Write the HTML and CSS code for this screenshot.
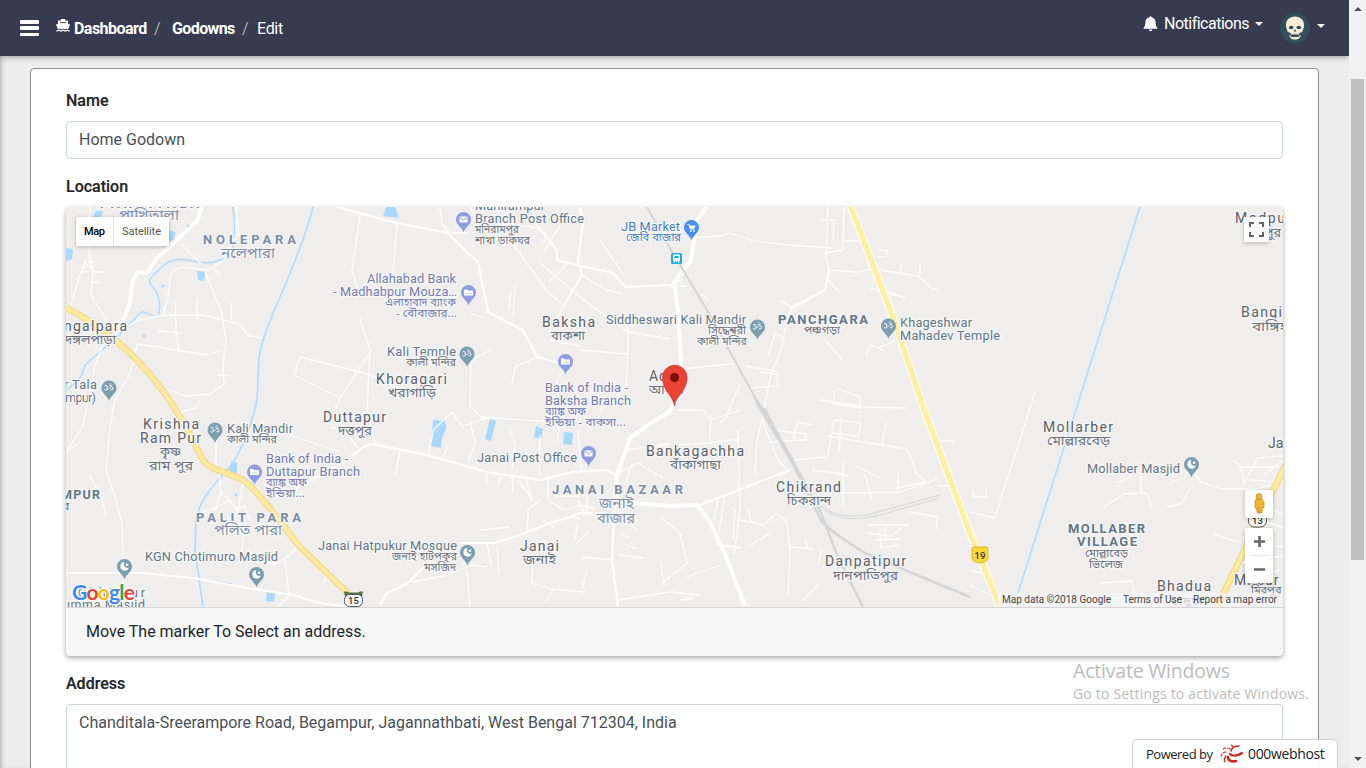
FILE: index.html
```html
<!DOCTYPE html>
<html lang="en">
<head>
<meta charset="utf-8">
<title>Edit Godown</title>
<link rel="stylesheet" href="styles.css">
</head>
<body>
<div class="page">
  <header class="navbar">
    <div class="burger"><i></i><i></i><i></i></div>
    <nav class="crumbs">
      <svg class="ship" viewBox="0 0 14 14"><path fill="#fff" d="M5 0h4v1.500h3v3.200l2 .8-1.600 4.500c-.7.2-1.300 0-1.800-.5-1 1-2.300 1-3.600 0-1 1-2.300 1-3.300 0-.5.5-1.100.7-1.800.5L0 5.500l2-.8V1.500h3z"/><path fill="none" stroke="#363b50" stroke-width=".9" d="M4 3.600h6"/><path fill="none" stroke="#fff" stroke-width="1.300" d="M.5 12c1.300 0 1.700-.8 2.300-.8s1.200.8 2.200.8 1.300-.8 2-.8 1.200.8 2.200.8 1.400-.8 2-.8 1 .8 2.300.8"/></svg>
      <b class="c1">Dashboard</b><span class="sl s1">/</span><b class="c2">Godowns</b><span class="sl s2">/</span><span class="c3">Edit</span>
    </nav>
    <div class="right">
      <svg class="bell" viewBox="0 0 15 16"><path fill="#fff" d="M6.500 1.200a1 1 0 0 1 2 0C11.600 1.700 12.600 4 12.600 6.500c0 3 .9 4.600 2.200 6.200H.2C1.500 11.100 2.400 9.500 2.400 6.500 2.400 4 3.400 1.700 6.500 1.200zM5.700 13.500h3.600a1.800 1.800 0 0 1-3.600 0z"/></svg>
      <span class="notif">Notifications</span><i class="caret"></i>
      <svg class="avatar" viewBox="0 0 30 30"><circle cx="15" cy="15" r="15" fill="#324f5e"/><path fill="#f9edd4" d="M15 3.500c5.500 0 9 3.600 9 8.500 0 3-1 4-1.300 6-.2 1.500-1.700 1.200-3 1.700-.8.5-.3 2-1.200 2.300h-7c-.9-.3-.4-1.800-1.200-2.300-1.300-.5-2.800-.2-3-1.700C7 16 6 15 6 12c0-4.900 3.500-8.500 9-8.500z"/><path fill="#f9edd4" d="M9.500 21.500l2 2.500h7l2-2.500c.5 3-2 5-5.500 5s-6-2-5.500-5z"/><ellipse cx="11.200" cy="14.500" rx="2.300" ry="1.800" fill="#324a5e"/><ellipse cx="18.800" cy="14.500" rx="2.300" ry="1.800" fill="#324a5e"/><path fill="#324a5e" d="M15 16l1.400 2.500h-2.800z"/><path stroke="#324a5e" stroke-width=".5" d="M11 21.800h8M13 20.500v2M15 20.500v2M17 20.500v2"/></svg>
      <i class="caret"></i>
    </div>
  </header>
  <main class="card">
    <label class="lab">Name</label>
    <div class="field">Home Godown</div>
    <label class="lab">Location</label>
    <section class="mapcard">
      <svg class="map" viewBox="66 207 1217 400">
        <defs>
          <g id="pin"><path d="M0 13C-1 8-7.500 5.500-7.500 0a7.500 7.500 0 0 1 15 0C7.500 5.500 1 8 0 13z"/></g>
          <g id="om"><use href="#pin" fill="#7b9eb0"/><path fill="none" stroke="#fff" stroke-width="1" d="M-4.500-2c2.500-1.500 4 .8 1.800 1.500C0 0-1.500 3.500-4.500 1.500M-1.200 .2c1.500 1.500 2-2 4-1.500 2.200.8 1 4.300-1.300 2.900M.3-3.200c.8 1 2.500.5 3-.3M1.500-4.800v.6"/></g>
          <g id="moon"><use href="#pin" fill="#7b9eb0"/><path fill="#fff" d="M0-4.500a4.300 4.300 0 1 0 4.300 5.500A3.600 3.600 0 0 1 0-4.500z"/><circle cx="2.500" cy="-1.800" r="1.300" fill="#fff"/></g>
          <g id="bank"><use href="#pin" fill="#909ce1"/><path fill="#fff" d="M-4.500-3h3l1 1h5v5h-9z"/><path stroke="#909ce1" stroke-width=".9" d="M-2 1h1M0 1h1M2 1h1"/></g>
          <g id="post"><use href="#pin" fill="#909ce1"/><path fill="#fff" d="M-4-3h8v6h-8z"/><path fill="none" stroke="#909ce1" d="M-4-2.500L0 .5l4-3"/></g>
        </defs>
        <rect x="66" y="207" width="1217" height="400" fill="#efeeed"/>
        <g class="water">
          <path d="M96 211h7l-2 6h-8zM168 230l7 2-1 8-7 2zM66 248l7 1-1 10-6 2zM197 271l8 1-1 9-6-1zM386 207h9l4 11-16-2zM433 420l12 1 1 8-4 9-1 10-10-2zM490 419l6 2-5 20-6-2zM536 426l7 3-2 10-7-2zM564 432l9 1-1 12-9-1zM231 461l6 2v10l-7-1zM267 592l8 1-1 9-8-1z"/>
          <circle cx="163" cy="286" r="1.500"/><circle cx="188" cy="226" r="1.500"/><circle cx="144" cy="336" r="1.500"/><circle cx="236" cy="495" r="1.500"/>
        </g>
        <g class="river">
          <path d="M313 207C306 235 297 257 286 283C275 310 262 335 259 358L257 400C252 424 243 446 233 463C220 480 200 495 196 520L195 550L203 607"/>
          <path d="M233 207C236 230 235 245 230 255C219 262 210 264 197 262C185 258 170 258 162 267C152 277 147 279 151 285C162 296 160 310 158 316C149 318 145 308 139 314L117 337L85 365L81 377L66 391"/>
          <path d="M1140 207L1018 593M209 581l22 3"/>
        </g>
        <g class="minor">
          <path d="M90 207l-1 48 4 15-2 25 17 27 1 14M87 258l-8 20-8 28M80 272h8m-3-9l8 6M92 272h12m-13 10h8M88 262h6M115 333l22-12 26-6 5-18 3-24 10-6 27 3 15-9 13-25 1-30M205 272l16 38 5 30-3 25 1 19-13 10-26 2-18-7M220 275l-8-8M160 316l10-1h33l20 5M175 302l1 29M197 310v10M197 297v20M223 320l15 4 11 12 14 2M231 303v17M158 331l22 2M176 331l3 22M134 358l3-14 20 3 50 8 16-5M133 363l-4 12-15 27-4 27 -4 40 10 32 6 22 2 65M103 345l-8 20-5 30-8 33-16 24M89 475l13 22 4 20M217 375h14M236 207l3 30M181 244l20 20"/>
          <path d="M397 223l-4 50M358 290l-6 -20 8-55M300 357l-6 18 46 23 30-46M300 357l60 15 25 8M340 398l-5 12M360 319l10 30 -3 58 8 37M470 207l7 12 26-2 8-10M440 207l2 17 8 10M448 233h20M535 223l22 27 0 10M583 223l-22-13M512 243l35 48 16 14M540 263l45 38 43 31 42 7M550 281l18-18M582 275l24 15 17 4M563 307l-8 15 1 12M620 315l8 14v20l-2 38-26 23M580 350l47 4M550 340l30 6M490 350l-19 11-1 45 14 14M537 357l-22 10-3 17M470 313l13 5M507 298l4-6-2 17M515 285l-2 32M567 365l-10 15 3 35M560 226l-16 25M534 227l12 7-2 8M500 224l35 3M600 240l24 35"/>
          <path d="M690 238l30-2 10-3 24 8 35 4 43 3M828 207l-2 50 3 13-4 20-25 15-8 3-4 10-8 35-9 20-7 38-7 30-2 32M844 207l-1 43-18 3M822 220h12l-1 20M843 241h20M828 270l30 2 15-3 45 7 13 12 6 2M885 290l20 8M900 275l1-11M920 275v-11M876 257h10l2-6-9-1M828 280l11 12M870 288l35 10M780 300l16 10M768 355l7-22 10 5M760 372l16 2 2 12-28 2M745 366l32 5M740 384l-15 35-6 4M825 340l17 20M866 355l4-10 15 6M878 348l22-9 10 1M834 390v14l28 4M820 400l46 7 40 1M836 388l24 9v10M708 300l-6-6M670 287l17-1M673 370l65-7M645 315l16 14"/>
        </g>
        <g class="minor">
          <path d="M678 410h25l7 10 30-10M711 415l-1 28-35 2M710 443l30-4M738 430l2 80-6 45M763 422l14 36 10 12M775 430l30 4 2 6-35 2M793 438l5-16 14 3M834 420l-7 40M834 420l27 3-3 13-27-3M827 436l80 13 10 25 9 8-30 6M841 418l-2 35M886 422l-4 23M793 460l33-3M812 470l24 3 12 3M843 463v43M856 466l24 12M898 472v20M865 475l7 25M840 493l60-1 38-13M869 525h40M880 530l1 18 17-3M875 540l25-1M885 525v14M866 533l25 3 10-8M718 500l-4 20M725 495l-8 50 25 3M735 510l-2 30M748 507l3 15M740 520l24 5 12-12 11 9 3 30-2 45M770 533l-19 12M790 547l24 2M805 540l4 10M660 517l20 16 7 30-25 20M686 577l35-12M818 565l3-15M822 567l65-7M803 600l16-16M680 600l13-2M910 512l28 5-2 12M937 486h16l3-5M941 440l14 2"/>
          <path d="M66 452l14-10M200 400l-4 8-15 4 6 21M187 430l6 12M216 440v30M219 472l2 20-5 15-14 5M221 492l17 18 6-5 6 15M229 500l-17 11M243 480l-6 37M245 520l-4 40M249 560l27 4 15-10 10-11M285 560l4 35-10 12M327 574l-4 10M290 435l50 17M330 427l28 7M360 450l-10-12M400 451l-5 25M428 455l6-26 18-17M452 412l10 14 26-8M448 447l-7 12M470 422l5 20-6 18M511 430l4 15-3 25M487 472v14M501 473l-3 13M512 475l1 17M525 475l7 27M548 478v22l16 10 17-5 15 4M555 496h25M527 530l1-20 12-10M543 520l12 8M575 540l3-18M590 530l-15 15M573 515l7 5M518 480l15 20M480 417l60 4 35 2M560 421l-3 22M578 430l3 40M587 496v16M540 435l-1 40M533 558l-1 25 18 6 35 3M553 589l-7 14M587 570l-5 20M462 565l10-12M412 582l35-7 25-10 15 2M467 570l3 37M487 543l4 22M497 545l2 30M480 530l30-3M632 463l-6 20M618 473l20-10 25 15M625 450l45-6M620 534l10 4M625 544l10 4M585 515l-7-15M618 555l25 3M612 560l-30-3M618 600l52-8 30 3M618 510l20 22M660 560l4 25"/>
          <path d="M973 490v7h13v-10M970 512l25 6M1035 392L995 518M1104 507l20-13 22-1 6 13M1141 466v28M1118 483l12-6v-12M1170 483l15-6 5-10 12 16 20 6h34l25-8M1190 488l-8 15-15 4M1205 483l10 4M1240 467h40M1243 485l15-27 25-2M1250 480l33 2M1264 475l19-14M1232 460l8 5 5 20M1100 583l32-2 4 26M1213 534l25 8M1233 560l25 5M970 570l15 4M970 585l20 10M1255 500l28 15M1262 520l21 8M1250 540l33 7M1248 560l35-4M1260 575l20-5"/>
        </g>
        <g class="medium">
          <path d="M337 207l60 16 51 10 19 19 11 10 10 50 35 18 14 27 23 6"/>
          <path d="M533 207l2 16 22 27v10l20 5 36 8 12 14 47-2 10-6M580 207l3 16-5 37 4 15-19 32"/>
          <path d="M293 490l50-27 20-16 9-3 55 11 60 17 53 8 33-8 34-2 10 6M380 605l7-12 20-9 20-20M460 543l35 0 25-8 30-12 20-6 10-4 33 1M615 500l-3 60 6 47M697 506l93-36"/>
          <path d="M66 573l77 0 50 5 54 10 46 7 27 8 30 4M829 270l-4 20-35 18"/>
        </g>
        <g class="major">
          <path d="M202 207l-5 14-20 19-20 18-10 15-9-1-6 11-2 20-8 20-7 10M707 207l-10 13-6 40-17 22 4 28 3 50-6 43-7 10-17 10-21 15-13 37-2 23 18 5 37 3 27-1 13 17 17 37 18 47"/>
        </g>
        <g class="rail">
          <path stroke-width="2" d="M647 207l20 36 40 67 50 91"/><path stroke-width="4" d="M756 400l37 62"/><path stroke-width="2.500" d="M764 408l18 34 29 58 11 22 14 12 27 18 37 16 70 29M782 442l38 68 17 45 26 52"/><path d="M820 505c15 12 30 12 47 10l73-20M825 510c16 11 30 9 47 7l65-18"/>
        </g>
        <g class="hwy-edge"><path d="M66 308C103 326 133 352 160 387C178 410 190 435 202 458C208 470 221 469 243 480C260 493 280 522 300 547L353 598"/><path d="M1286 464L1217 607"/></g>
        <g class="hwy"><path d="M66 308C103 326 133 352 160 387C178 410 190 435 202 458C208 470 221 469 243 480C260 493 280 522 300 547L353 598"/><path d="M1286 464L1217 607"/></g>
        <path d="M850 205l43 112 32 95 45 121 31 76" fill="none" stroke="#fffdf2" stroke-width="8"/>
        <path d="M850 205l43 112 32 95 45 121 31 76" fill="none" stroke="#fdeea4" stroke-width="5.500"/>

        <g class="town">
          <g class="gray">
            <text x="100" y="208" textLength="99">PAKHITALA</text>
            <text x="203" y="244" textLength="93">NOLEPARA</text>
            <text x="196" y="522" textLength="105">PALIT PARA</text>
            <text x="552" y="494" textLength="131">JANAI BAZAAR</text>
          </g>
          <text x="778" y="324" textLength="90">PANCHGARA</text>
          <text x="1068" y="533" textLength="77">MOLLABER</text>
          <text x="1077" y="546" textLength="60">VILLAGE</text>
          <text x="61" y="499" textLength="39" class="sm">MPUR</text>
        </g>
        <g class="place">
          <text x="64" y="331" textLength="63">ngalpara</text>
          <text x="542" y="327" textLength="53">Baksha</text>
          <text x="376" y="384" textLength="71">Khoragari</text>
          <text x="323" y="422" textLength="63">Duttapur</text>
          <text x="143" y="429" textLength="56">Krishna</text>
          <text x="140" y="443" textLength="61">Ram Pur</text>
          <text x="649" y="381" textLength="35">Adan</text>
          <text x="646" y="456" textLength="98">Bankagachha</text>
          <text x="776" y="492" textLength="65">Chikrand</text>
          <text x="825" y="566" textLength="81">Danpatipur</text>
          <text x="520" y="551" textLength="39">Janai</text>
          <text x="1043" y="432" textLength="70">Mollarber</text>
          <text x="1157" y="591" textLength="54">Bhadua</text>
          <text x="1241" y="317" textLength="41">Bangi</text>
          <text x="1235" y="223" textLength="50">Madpu</text>
          <text x="1268" y="448">Jan</text>
          <text x="1234" y="585" textLength="62">Mirsar M</text>
          <text x="78" y="597" textLength="67" class="np">Chhitnur</text>
          <text x="63" y="609" textLength="82" class="np">umma Masjid</text>
        </g>
        <g class="poi">
          <text x="367" y="283" textLength="89" class="p">Allahabad Bank</text>
          <text x="333" y="296" textLength="124" class="p">- Madhabpur Mouza…</text>
          <text x="545" y="391.500" textLength="83" class="p">Bank of India -</text>
          <text x="545" y="404.500" textLength="86" class="p">Baksha Branch</text>
          <text x="266" y="462.500" textLength="82" class="p">Bank of India -</text>
          <text x="266" y="475.500" textLength="94" class="p">Duttapur Branch</text>
          <text x="621" y="230.500" textLength="59" class="b">JB Market</text>
          <text x="475" y="210" textLength="70">Manirampur</text>
          <text x="475" y="222.500" textLength="109">Branch Post Office</text>
          <text x="477" y="461.500" textLength="100">Janai Post Office</text>
          <text x="387" y="355.500" textLength="69">Kali Temple</text>
          <text x="227" y="432.500" textLength="66">Kali Mandir</text>
          <text x="606" y="323.500" textLength="140">Siddheswari Kali Mandir</text>
          <text x="900" y="326.500" textLength="72">Khageshwar</text>
          <text x="900" y="339.500" textLength="100">Mahadev Temple</text>
          <text x="64" y="388.500" textLength="33">r Tala</text>
          <text x="65" y="401.500" textLength="31">mpur)</text>
          <text x="145" y="560.500" textLength="133">KGN Chotimuro Masjid</text>
          <text x="318" y="549.500" textLength="139">Janai Hatpukur Mosque</text>
          <text x="1087" y="472.500" textLength="93">Mollaber Masjid</text>
        </g>
        <g class="bn">
          <text x="119" y="220" textLength="60" lengthAdjust="spacingAndGlyphs" class="l">পাখিতালা</text>
          <text x="221" y="258" textLength="54" lengthAdjust="spacingAndGlyphs" class="l">নলেপারা</text>
          <text x="214" y="535" textLength="68" lengthAdjust="spacingAndGlyphs" class="l">পলিত পারা</text>
          <text x="599" y="508" textLength="35" lengthAdjust="spacingAndGlyphs" class="l">জনাই</text>
          <text x="597" y="523" textLength="38" lengthAdjust="spacingAndGlyphs" class="l">বাজার</text>
          <text x="65" y="344" textLength="51" lengthAdjust="spacingAndGlyphs">দঙ্গলপাড়া</text>
          <text x="551" y="340" textLength="34" lengthAdjust="spacingAndGlyphs">বাকশা</text>
          <text x="388" y="397" textLength="48" lengthAdjust="spacingAndGlyphs">খরাগাড়ি</text>
          <text x="338" y="435" textLength="34" lengthAdjust="spacingAndGlyphs">দত্তপুর</text>
          <text x="160" y="456" textLength="21" lengthAdjust="spacingAndGlyphs">কৃষ্ণ</text>
          <text x="149" y="470" textLength="44" lengthAdjust="spacingAndGlyphs">রাম পুর</text>
          <text x="649" y="394" textLength="35" lengthAdjust="spacingAndGlyphs">আদান</text>
          <text x="670" y="469" textLength="51" lengthAdjust="spacingAndGlyphs">বাঁকাগাছা</text>
          <text x="787" y="505" textLength="44" lengthAdjust="spacingAndGlyphs">চিকরান্দ</text>
          <text x="833" y="580" textLength="65" lengthAdjust="spacingAndGlyphs">দানপাতিপুর</text>
          <text x="523" y="564" textLength="33" lengthAdjust="spacingAndGlyphs">জনাই</text>
          <text x="1047" y="445" textLength="63" lengthAdjust="spacingAndGlyphs">মোল্লারবেড়</text>
          <text x="1252" y="331" textLength="36" lengthAdjust="spacingAndGlyphs">বাঙ্গিহ</text>
          <text x="1250" y="237" textLength="31" lengthAdjust="spacingAndGlyphs">মদপুর</text>
          <text x="804" y="334" textLength="36" lengthAdjust="spacingAndGlyphs" class="s">পঞ্চগড়া</text>
          <text x="1085" y="557" textLength="43" lengthAdjust="spacingAndGlyphs" class="s">মোল্লাবেড়</text>
          <text x="1089" y="568" textLength="34" lengthAdjust="spacingAndGlyphs" class="s">ভিলেজ</text>
          <text x="1170" y="605" textLength="33" lengthAdjust="spacingAndGlyphs" class="s">ভাদুয়া</text>
          <text x="1251" y="594" textLength="40" lengthAdjust="spacingAndGlyphs" class="s">মিরপুর ম</text>
          <text x="475" y="233" textLength="44" lengthAdjust="spacingAndGlyphs" class="s">মনিরামপুর</text>
          <text x="475" y="244" textLength="55" lengthAdjust="spacingAndGlyphs" class="s">শাখা ডাকঘর</text>
          <text x="406" y="366" textLength="50" lengthAdjust="spacingAndGlyphs" class="s">কালী মন্দির</text>
          <text x="227" y="443" textLength="50" lengthAdjust="spacingAndGlyphs" class="s">কালী মন্দির</text>
          <text x="708" y="334" textLength="38" lengthAdjust="spacingAndGlyphs" class="s">সিদ্ধেশ্বরী</text>
          <text x="697" y="345" textLength="50" lengthAdjust="spacingAndGlyphs" class="s">কালী মন্দির</text>
          <text x="392" y="560" textLength="65" lengthAdjust="spacingAndGlyphs" class="s">জনাই হাটপুকুর</text>
          <text x="424" y="571" textLength="32" lengthAdjust="spacingAndGlyphs" class="s">মসজিদ</text>
          <text x="626" y="241" textLength="55" lengthAdjust="spacingAndGlyphs" class="s bb">জেবি বাজার</text>
          <text x="385" y="306" textLength="71" lengthAdjust="spacingAndGlyphs" class="s p">এলাহাবাদ ব্যাংক</text>
          <text x="396" y="317" textLength="61" lengthAdjust="spacingAndGlyphs" class="s p">- বৌবাজার...</text>
          <text x="545" y="415" textLength="41" lengthAdjust="spacingAndGlyphs" class="s p">ব্যাঙ্ক অফ</text>
          <text x="545" y="426" textLength="81" lengthAdjust="spacingAndGlyphs" class="s p">ইন্ডিয়া - বাকসা...</text>
          <text x="266" y="486" textLength="41" lengthAdjust="spacingAndGlyphs" class="s p">ব্যাঙ্ক অফ</text>
          <text x="266" y="497" textLength="39" lengthAdjust="spacingAndGlyphs" class="s p">ইন্ডিয়া...</text>
          <text x="63" y="510" class="s">র</text>
        </g>

        <use href="#om" x="109" y="388"/><use href="#om" x="467" y="354"/><use href="#om" x="215" y="430"/><use href="#om" x="757.500" y="327"/><use href="#om" x="888.500" y="326"/>
        <use href="#moon" x="124.500" y="566.500"/><use href="#moon" x="256.500" y="574.500"/><use href="#moon" x="467.500" y="552.500"/><use href="#moon" x="1191.500" y="464.500"/>
        <use href="#bank" x="468.500" y="292.500"/><use href="#bank" x="565.500" y="361.500"/><use href="#bank" x="254.500" y="472"/>
        <use href="#post" x="463.500" y="219.500"/><use href="#post" x="588.500" y="453.500"/>
        <use href="#pin" x="691.500" y="227.500" fill="#4a8df0"/><path d="M687.500 224.500h1.500l1.300 4.500h4" fill="none" stroke="#fff"/><path d="M689.500 225.500h6l-1 3h-4z" fill="#fff"/><circle cx="690.800" cy="231" r=".9" fill="#fff"/><circle cx="694" cy="231" r=".9" fill="#fff"/>
        <rect x="671" y="253" width="11" height="11" rx="1.500" fill="#1cace8"/><rect x="673" y="254.500" width="7" height="7" rx="1" fill="#fff"/><path d="M674.500 256h4v2h-4z" fill="#1cace8"/><path d="M674 263l1-2m4 2l-1-2" stroke="#fff"/>
        <path d="M674.500 406c-1-10-12-15-12-28.500a12.300 12.300 0 0 1 24.600 0c0 13.500-11.600 18.500-12.600 28.500z" fill="#ea4335" stroke="#c9382d" stroke-width=".7"/><circle cx="674.500" cy="377.500" r="4.500" fill="#7d0f0a"/>
        <path d="M344 591.500h3l2 1h9l2-1h3l-1 5h-17z" fill="#50764b"/><rect x="344.500" y="594.500" width="18" height="12" rx="5" fill="#fff" stroke="#555"/><text x="353.500" y="604" class="shield">15</text>
        <path d="M973 547h14l1 3v8q0 4-8 5-8-1-8-5v-8z" fill="#fdd835" stroke="#caa51f" stroke-width=".7"/><text x="980" y="558.500" class="shield">19</text>
        <rect x="1248.500" y="514" width="18" height="13" rx="6" fill="#fff" stroke="#555"/><text x="1257.500" y="524" class="shield">13</text>

        <g class="ctl"><rect x="76" y="217" width="93" height="29" rx="2"/><rect x="1244" y="217" width="25" height="25"/><rect x="1245" y="490" width="28" height="28" rx="2"/><rect x="1245" y="528" width="28" height="55" rx="2"/></g>
        <path d="M113.500 217v29M1250 555.500h18" stroke="#e6e6e6"/>
        <text x="84" y="235" class="tab on" textLength="21">Map</text><text x="122" y="235" class="tab" textLength="39">Satellite</text>
        <path d="M1250 227v-4h4m5 0h4v4m0 5v4h-4m-5 0h-4v-4" fill="none" stroke="#666" stroke-width="2"/>
        <path d="M1254 541.500h11M1259.500 536v11M1254 569.500h11" stroke="#666" stroke-width="2.600"/>
        <g fill="#f6b12d" stroke="#b87a17" stroke-width=".6"><path d="M1256 499h6l2 3v6h-1.500l-.7 5h-4.600l-.7-5h-1.500v-6z"/><circle cx="1259" cy="496.500" r="3"/><path d="M1259 507v6"/></g>
        <rect x="998" y="593" width="285" height="14" fill="#f5f5f5" opacity=".7"/>
        <text x="1002" y="603" class="legal" textLength="109">Map data ©2018 Google</text><text x="1123" y="603" class="legal" textLength="59">Terms of Use</text><text x="1193" y="603" class="legal" textLength="84">Report a map error</text>
        <text x="72" y="600" class="glogo halo" textLength="63">Google</text>
        <text x="72" y="600" class="glogo" textLength="63"><tspan fill="#4285f4">G</tspan><tspan fill="#ea4335">o</tspan><tspan fill="#fbbc05">o</tspan><tspan fill="#4285f4">g</tspan><tspan fill="#34a853">l</tspan><tspan fill="#ea4335">e</tspan></text>
      </svg>
      <div class="foot">Move The marker To Select an address.</div>
    </section>
    <label class="lab">Address</label>
    <div class="field area">Chanditala-Sreerampore Road, Begampur, Jagannathbati, West Bengal 712304, India</div>
  </main>
</div>
<aside class="scroll"><i class="up"></i><div class="thumb"></div><i class="down"></i></aside>
<div class="activate"><div class="a1">Activate Windows</div><div class="a2">Go to Settings to activate Windows.</div></div>
<div class="host"><span class="pw">Powered by</span>
  <svg viewBox="0 0 24 22"><g fill="none" stroke="#d0271d" stroke-linecap="round"><path stroke-width="2.200" d="M10 11c2 2.500 8 2 12-1"/><path stroke-width="2.600" d="M8 14c0 4 4 5 8 4"/><path stroke-width="1.600" d="M11 8c1-4 5-5 8-5"/><path stroke-width="1.300" d="M6 13c-2 2-2 4-1 6"/><path stroke-width="1.200" d="M6 9c-3 0-4 2-5 4" stroke-dasharray="3 2"/><path stroke-width="1.200" d="M10 6C7 4 4 5 2 7M13 4c-1-2-2-2-3-2" stroke-dasharray="2.500 2"/></g></svg>
  <span class="hw">000webhost</span></div>
</body>
</html>
```
FILE: styles.css
```css
* { box-sizing: border-box; }
body { margin: 0; width: 1366px; height: 768px; overflow: hidden; display: flex; background: #ededed; font-family: Roboto, "Liberation Sans", sans-serif; font-size: 16px; line-height: 24px; color: #212529; position: relative; }
.page { width: 1349px; height: 768px; overflow: hidden; box-shadow: inset 4px 0 5px -3px #aaa; }
.navbar { height: 56px; background: #363b50; color: #fff; display: flex; align-items: center; padding: 0 24px 0 20px; box-shadow: 0 1px 6px rgba(0,0,0,.35); position: relative; }
.burger { width: 19px; height: 16px; display: flex; flex-direction: column; justify-content: space-between; }
.burger i { height: 3.500px; background: #fff; border-radius: 1px; }
.crumbs { display: flex; align-items: center; margin-left: 17px; flex: 1; white-space: nowrap; padding-top: 1px; }
.ship { width: 14px; height: 14px; margin: -6px 4px 0 0; }
.crumbs b { font-weight: 700; }
.c1 { width: 73px; letter-spacing: -.53px; }
.c2 { width: 63px; letter-spacing: -.6px; }
.c3 { letter-spacing: -.3px; }
.sl { color: #aeb1bb; width: 8px; }
.s1 { margin: 0 10px 0 7px; }
.s2 { margin: 0 7px 0 7px; }
.right { display: flex; align-items: center; height: 56px; }
.bell { width: 15px; height: 16px; margin: -8px 6px 0 0; }
.notif { width: 85px; margin-top: -8px; white-space: nowrap; font-weight: 400; letter-spacing: -.55px; letter-spacing: -.5px; }
.caret { border: 4.500px solid transparent; border-top-color: #fff; border-bottom: 0; margin: -9px 0 0 6px; }
.avatar { width: 30px; height: 30px; margin-left: 17px; }
.avatar + .caret { margin: -4px 0 0 7px; }
.card { margin: 12px 30px 0; height: 760px; border: 1px solid #8c8c8c; border-radius: 4px; background: #fff; padding: 20px 35px; }
.lab { display: block; font-weight: 500; margin-bottom: 8px; -webkit-text-stroke: .2px #212529; }
.field { height: 38px; border: 1px solid #ced4da; border-radius: 4px; padding: 6px 12px; margin-bottom: 16px; color: #495057; }
.area { height: 130px; }
.mapcard { border-radius: 4px; overflow: hidden; box-shadow: 0 2px 5px rgba(0,0,0,.35); margin-bottom: 16px; background: #f7f7f7; }
.map { display: block; width: 1217px; height: 400px; }
.foot { height: 49px; border-top: 1px solid #d5d5d5; padding: 12px 20px; }
.scroll { width: 17px; height: 768px; background: #f1f1f1; display: flex; flex-direction: column; align-items: center; }
.up { border: 4px solid transparent; border-bottom: 4px solid #505050; border-top: 0; margin-top: 7px; }
.thumb { width: 13px; height: 481px; background: #c1c1c1; margin-top: 68px; }
.down { border: 4px solid transparent; border-top: 4px solid #505050; border-bottom: 0; margin: auto 0 7px; }
.activate { position: absolute; left: 1073px; top: 658px; color: #bcbcbc; font-family: "Open Sans", "Noto Sans", sans-serif; white-space: nowrap; }
.a1 { font-size: 19.500px; line-height: 26px; letter-spacing: -.2px; }
.a2 { font-size: 14px; line-height: 20px; letter-spacing: .19px; }
.host { position: absolute; left: 1132px; top: 739px; width: 206px; height: 34px; border: 1px solid #d0d0d0; border-radius: 5px; background: rgba(255,255,255,.9); display: flex; align-items: flex-start; padding: 3px 0 0 13px; font: 13px/22px "Open Sans", sans-serif; color: #222; white-space: nowrap; }
.host svg { width: 24px; height: 22px; margin: 0 4px 0 7px; }
.pw { width: 67px; letter-spacing: -.5px; }
.hw { font-size: 14px; font-weight: 500; letter-spacing: -.35px; }
.water { fill: #a9d8fd; }
.river { fill: none; stroke: #b1dafb; stroke-width: 1.600; }
.minor, .medium, .major, .rail, .hwy, .hwy-edge { fill: none; stroke: #fff; stroke-linejoin: round; }
.minor { stroke-width: 1.300; opacity: .9; }
.medium { stroke-width: 2; }
.major { stroke-width: 4; }
.rail { stroke: #d3d5d7; stroke-width: 1; }
.hwy-edge { stroke: #f4d289; stroke-width: 6.500; }
.hwy { stroke: #ffeb9c; stroke-width: 4.500; }
.map text { paint-order: stroke; stroke: #f6f6f6; stroke-width: 2.500px; stroke-linejoin: round; }
.town { font-size: 13px; font-weight: 700; fill: #657684; }
.town .sm { font-size: 12.500px; }
.town .gray { fill: #7c8ba3; }
.place { font-size: 14px; fill: #5b6067; }
.place .np { font-size: 12.500px; fill: #66767f; }
.poi { font-size: 12.800px; fill: #647786; }
.poi .p, .bn .p { fill: #757bad; }
.poi .b, .bn .bb { fill: #4a7fc1; }
.bn { font-family: "Noto Sans Bengali", "Noto Sans", sans-serif; font-size: 13px; fill: #6b717b; }
.bn .l { fill: #8290a8; font-size: 14px; }
.bn .s { font-size: 10.500px; }
.map .shield { font-size: 9.500px; font-weight: 500; fill: #333; text-anchor: middle; stroke: none; }
.ctl { fill: #fff; filter: drop-shadow(0 1px 2px rgba(0,0,0,.25)); }
.map .tab { font-size: 11px; fill: #565656; stroke: none; }
.map .on { font-weight: 500; fill: #000; }
.map .legal { font-size: 10px; fill: #444; stroke: none; }
.map .glogo { font-family: Lato, sans-serif; font-size: 21px; font-weight: 700; stroke: none; }
.map .halo { stroke: #fff; fill: #fff; }
```
